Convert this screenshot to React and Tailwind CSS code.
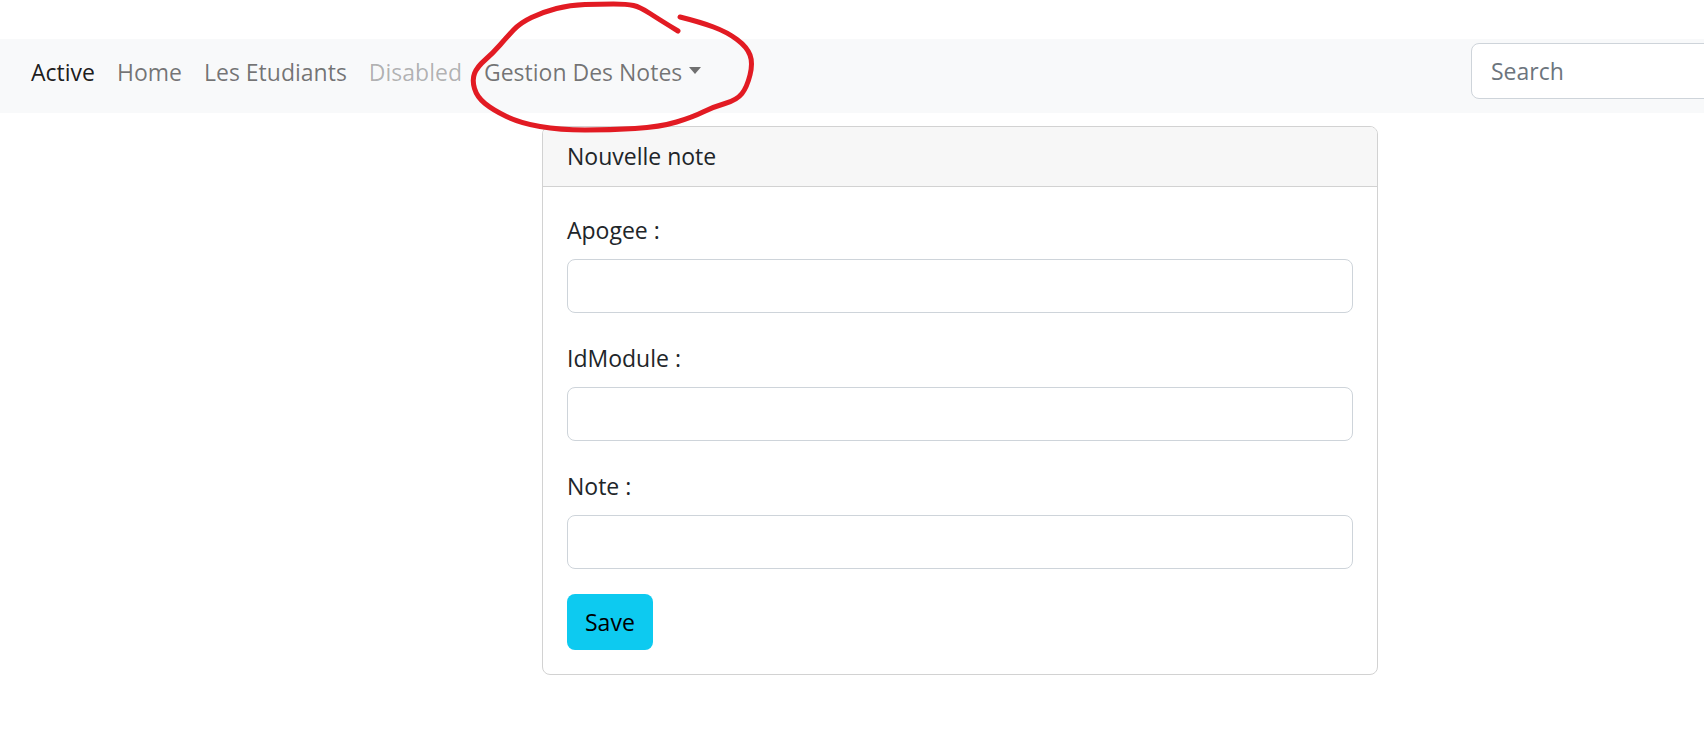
export default function App() {
  return (
    <div className="relative min-h-screen overflow-hidden bg-white font-['Open_Sans',sans-serif] text-[23px] text-[#212529]">
      <nav className="mt-[39px] flex h-[74px] items-start overflow-hidden bg-[#f8f9fa] pl-[20px]">
        <ul className="mt-[15px] flex leading-[36px]">
          <li className="px-[11px] text-black/90">Active</li>
          <li className="px-[11px] text-black/55">Home</li>
          <li className="px-[11px] text-black/55">Les Etudiants</li>
          <li className="px-[11px] text-black/30">Disabled</li>
          <li className="flex items-center px-[11px] text-black/55">
            Gestion Des Notes
            <span className="ml-[7px] mt-[-4px] h-0 w-0 border-x-[6px] border-t-[7px] border-x-transparent border-t-[#707070]" />
          </li>
        </ul>
        <input
          placeholder="Search"
          className="ml-auto mr-[-40px] mt-[4px] h-[56px] w-[273px] rounded-[8px] border border-[#ced4da] bg-white px-[19px] text-[23px] outline-none placeholder:text-[#6c757d]"
        />
      </nav>

      <div className="ml-[542px] mt-[13px] w-[836px] overflow-hidden rounded-[8px] border border-[#d2d2d2]">
        <div className="flex h-[60px] items-center border-b border-[#d2d2d2] bg-[#f7f7f7] px-[24px]">
          Nouvelle note
        </div>
        <div className="px-[24px] pb-[24px] pt-[25px]">
          <label className="mb-[11px] block leading-[36px]">Apogee :</label>
          <input className="block h-[54px] w-full rounded-[8px] border border-[#ced4da] outline-none" />

          <label className="mb-[11px] mt-[27px] block leading-[36px]">IdModule :</label>
          <input className="block h-[54px] w-full rounded-[8px] border border-[#ced4da] outline-none" />

          <label className="mb-[11px] mt-[27px] block leading-[36px]">Note :</label>
          <input className="block h-[54px] w-full rounded-[8px] border border-[#ced4da] outline-none" />

          <button className="mt-[25px] h-[56px] rounded-[8px] bg-[#0dcaf0] px-[18px] text-black">
            Save
          </button>
        </div>
      </div>

      {/* hand-drawn highlight from the screenshot */}
      <svg className="pointer-events-none absolute left-0 top-0" width="800" height="150">
        <path
          d="M678 31 Q660 20 650 13.5 Q640 7 633.5 5.5 Q627 4 613.5 4 Q600 4 585 4.5 Q570 5 556.5 8.5 Q543 12 531.5 17.5 Q520 23 513.5 30 Q507 37 500 45 Q493 53 485 60 Q477 67 474.5 73.5 Q472 80 474.5 88.5 Q477 97 485 103.5 Q493 110 506.5 116.5 Q520 123 540 126.5 Q560 130 585 130 Q610 130 635 128.5 Q660 127 676.5 122 Q693 117 703 112 Q713 107 725 103.5 Q737 100 742 93.5 Q747 87 750 75 Q753 63 750 55 Q747 47 737 39.5 Q727 32 713.5 27 Q700 22 680 17"
          fill="none"
          stroke="#e21b23"
          strokeWidth="5"
          strokeLinecap="round"
          strokeLinejoin="round"
        />
      </svg>
    </div>
  );
}
